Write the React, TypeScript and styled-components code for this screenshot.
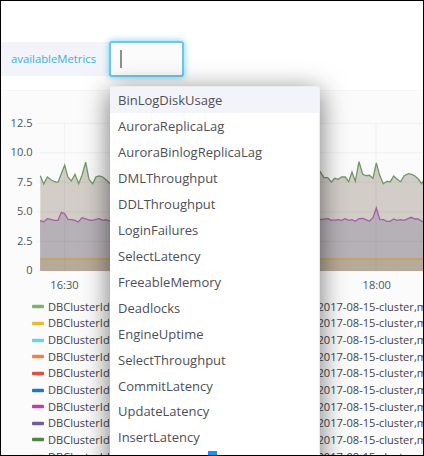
import React from "react";
import styled, { createGlobalStyle } from "styled-components";

const GlobalStyle = createGlobalStyle`
  * { box-sizing: border-box; }
  body { margin: 0; background: #fff; font-family: "Open Sans", "Noto Sans", sans-serif; color: #52545c; overflow: hidden; }
`;

const Frame = styled.main`
  position: relative;
  width: 424px;
  height: 456px;
  border: 1px solid #000;
  background: #fff;
  overflow: hidden;
`;

const Toolbar = styled.div`
  display: flex;
  align-items: center;
  height: 89px;
  padding-top: 27px;
`;

const VariableLabel = styled.label`
  width: 108px;
  height: 34px;
  padding-left: 10px;
  background: #f3f4f9;
  color: #3eade0;
  font-size: 11.3px;
  line-height: 34px;
`;

const VariableInput = styled.div`
  display: flex;
  align-items: center;
  width: 75px;
  height: 36px;
  padding-left: 9px;
  border: 2px solid #6ec6e8;
  border-radius: 3px;
  background: #fbfbfb;
  box-shadow: 0 0 7px #6dcdf0;
`;

const Caret = styled.span`
  width: 1.5px;
  height: 18px;
  background: #8e8e8e;
`;

const Panel = styled.section`
  height: 366px;
  background: #fbfbfb;
  border-top: 1px solid #f5f5f5;
  overflow: hidden;
`;

const Chart = styled.svg`
  display: block;
  width: 422px;
  height: 207px;
  margin-bottom: 0.4px;
  font-family: "Open Sans", "Noto Sans", sans-serif;
  font-size: 11.1px;
  fill: #505257;
`;

const LegendRow = styled.div`
  display: grid;
  grid-template-columns: 16px 269.5px 1fr;
  align-items: center;
  height: 16.67px;
  padding-left: 31px;
  font-size: 11.1px;
  line-height: 16px;
  white-space: nowrap;
  color: #424448;
`;

const Swatch = styled.svg`
  display: block;
  width: 12px;
  height: 5px;
`;

const Menu = styled.ul`
  position: absolute;
  left: 109px;
  top: 85px;
  width: 210px;
  height: 400px;
  margin: 0;
  padding: 0.4px 0 0;
  list-style: none;
  background: #fff;
  border: 1px solid #ededed;
  border-width: 1px 1px 0 0;
  border-radius: 3px;
  box-shadow: 0 5px 27px rgba(0, 0, 0, 0.55);
`;

const MenuItem = styled.li<{ $active?: boolean }>`
  height: 25.93px;
  padding-left: 8px;
  background: ${(p) => (p.$active ? "#f3f4f9" : "transparent")};
  font-size: 13px;
  line-height: 26px;
  color: #4e4f56;
`;

const ResizeHandle = styled.span`
  position: absolute;
  left: 207px;
  bottom: 0;
  width: 9px;
  height: 4px;
  background: #0a96fb;
`;

type Point = [number, number];

const scale = (pts: Point[], x: number, y: number) =>
  pts.map(([a, b]) => `${(x + a / 3).toFixed(1)},${(y + b / 3).toFixed(1)}`).join(" ");

const green = scale([[121,287],[131,312],[142,291],[153,299],[164,305],[174,307],[194,255],[204,292],[214,303],[225,283],[236,311],[246,286],[257,247],[267,298],[278,311],[288,290],[298,288],[308,291],[318,299],[330,311]], 0, 80)
  + " " + scale([[60,94],[72,113],[83,113],[94,126],[104,115],[115,118],[125,111],[136,111],[146,125],[156,96],[166,124],[177,65],[188,103],[198,107],[208,106],[219,115],[229,69],[239,106],[250,131],[260,124],[271,125],[281,108],[291,118],[302,125],[313,107],[325,101],[335,103],[345,108],[355,117],[365,131],[371,120]], 300, 140);

const purple = scale([[120,122],[131,125],[142,116],[152,118],[163,121],[174,121],[184,97],[194,101],[204,118],[215,119],[225,121],[235,126],[246,113],[256,116],[267,120],[278,121],[288,118],[298,116],[308,121],[318,119],[330,123]], 0, 180)
  + " " + scale([[60,239],[84,236],[95,241],[115,239],[125,241],[135,236],[146,241],[156,239],[166,244],[177,236],[188,235],[198,239],[208,244],[219,233],[229,204],[239,238],[250,239],[260,244],[270,244],[281,237],[291,241],[302,239],[312,241],[334,232],[345,237],[355,237],[365,244],[371,244]], 300, 140);

const ticks: [string, number][] = [["12.5", 123.3], ["10.0", 152.7], ["7.5", 182.2], ["5.0", 211.8], ["2.5", 241.4], ["0", 270.8]];

const swatches = ["#7eb26d", "#eab839", "#6ed0e0", "#ef843c", "#e24d42", "#1f78c1", "#ba43a9", "#705da0", "#508642", "#eac14a"];

const metrics = ["BinLogDiskUsage", "AuroraReplicaLag", "AuroraBinlogReplicaLag", "DMLThroughput", "DDLThroughput", "LoginFailures", "SelectLatency", "FreeableMemory", "Deadlocks", "EngineUptime", "SelectThroughput", "CommitLatency", "UpdateLatency", "InsertLatency"];

export default function App() {
  return (
    <>
      <GlobalStyle />
      <Frame>
        <Toolbar>
          <VariableLabel>availableMetrics</VariableLabel>
          <VariableInput><Caret /></VariableInput>
        </Toolbar>
        <Panel>
          <Chart viewBox="1 91 422 207">
            <polygon points={`40.3,270.8 ${green} 424,270.8`} fill="#d2cdc7" />
            <polygon points={`40.3,270.8 ${purple} 424,270.8`} fill="#b6b1b6" />
            <rect x="40.3" y="259" width="384" height="11.8" fill="#b8aa99" />
            {ticks.map(([label, y]) => (
              <g key={label}>
                <line x1="37" x2="423" y1={y} y2={y} stroke="#000" strokeOpacity=".045" />
                <text x="32.5" y={y + 3.6} textAnchor="end">{label}</text>
              </g>
            ))}
            {[64.6, 376].map((x) => (
              <line key={x} x1={x} x2={x} y1="123" y2="271" stroke="#000" strokeOpacity=".045" />
            ))}
            <polyline points={green} fill="none" stroke="#709767" strokeWidth="1.3" />
            <polyline points={purple} fill="none" stroke="#a35fa8" strokeWidth="1.3" />
            <line x1="40.3" x2="424" y1="259" y2="259" stroke="#c9a04c" strokeWidth="1.4" />
            <text x="64.5" y="288.7" textAnchor="middle">16:30</text>
            <text x="376.7" y="288.7" textAnchor="middle">18:00</text>
          </Chart>
          {swatches.map((color) => (
            <LegendRow key={color}>
              <Swatch viewBox="0 0 12 5">
                <rect y="0.8" width="12" height="3.4" rx="1" fill={color} />
              </Swatch>
              <span>DBClusterId</span>
              <span>2017-08-15-cluster,m</span>
            </LegendRow>
          ))}
        </Panel>
        <Menu>
          {metrics.map((name, i) => (
            <MenuItem key={name} $active={i === 0}>{name}</MenuItem>
          ))}
        </Menu>
        <ResizeHandle />
      </Frame>
    </>
  );
}
